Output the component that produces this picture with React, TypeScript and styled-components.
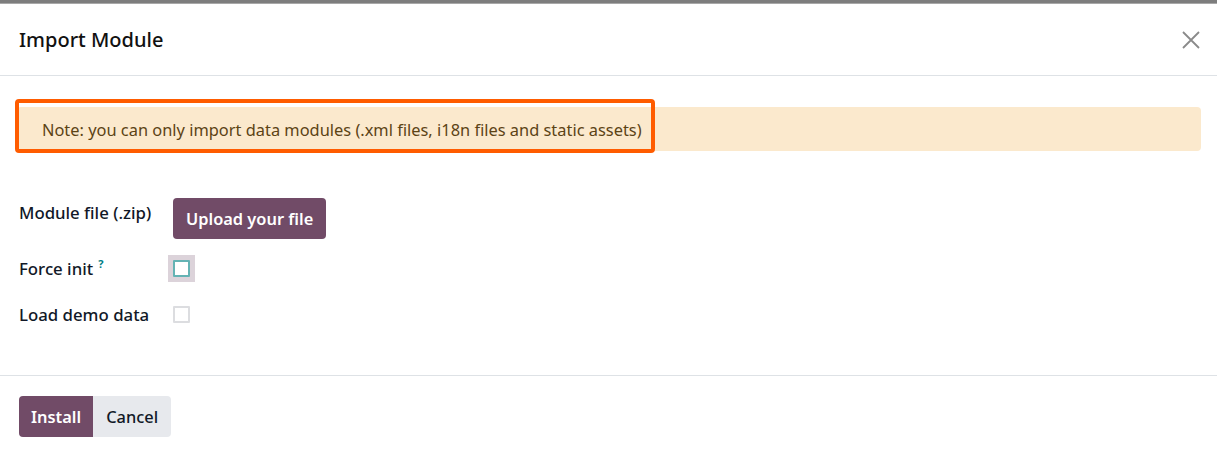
import React, { FC } from 'react'
import styled, { createGlobalStyle } from 'styled-components'

const GlobalStyle = createGlobalStyle`
  html, body {
    margin: 0;
    padding: 0;
    background: #ffffff;
  }

  body {
    font-family: 'Noto Sans', 'Open Sans', sans-serif;
    color: #111827;
  }
`

const Backdrop = styled.div`
  height: 3px;
  background: #7d7d7d;
  border-bottom: 1px solid #a8a8a8;
`

const Dialog = styled.div`
  display: flex;
  flex-direction: column;
  background: #ffffff;
`

const Header = styled.div`
  display: flex;
  align-items: center;
  justify-content: space-between;
  height: 71px;
  padding: 0 16px 0 19px;
  border-bottom: 1px solid #dee2e6;

  h4 {
    margin: 0;
    font-size: 20px;
    font-weight: 500;
    color: #111111;
  }
`

const CloseButton = styled.button`
  display: flex;
  border: 0;
  background: transparent;
  padding: 0;
  cursor: pointer;

  svg {
    width: 20px;
    height: 20px;
  }
`

const Body = styled.div`
  position: relative;
  display: flex;
  flex-direction: column;
  padding: 31px 16px 0 17px;
  height: 268px;
  border-bottom: 1px solid #dee2e6;
`

const Alert = styled.div`
  display: flex;
  align-items: center;
  height: 44px;
  padding: 0 25px;
  background: #fbe9cd;
  border-radius: 4px;
  color: #5c4315;
  font-size: 16.4px;
`

const Highlight = styled.div`
  position: absolute;
  left: 15px;
  top: 23px;
  width: 632px;
  height: 46px;
  border: 4px solid #ff5c00;
  border-radius: 4px;
`

const Form = styled.div`
  display: grid;
  grid-template-columns: 154px auto;
  grid-template-rows: 47px 46px 46px;
  margin-top: 47px;
  padding-left: 2px;
`

const Label = styled.label`
  display: flex;
  align-items: center;
  font-size: 16.8px;
  font-weight: 500;
  color: #111827;

  sup {
    align-self: flex-start;
    margin: 11px 0 0 5px;
    font-size: 11px;
    font-weight: 700;
    line-height: 15px;
    color: #017e84;
  }
`

const TopLabel = styled(Label)`
  align-items: flex-start;
  padding-top: 3px;
`

const Field = styled.div<{ $top?: boolean }>`
  display: flex;
  align-items: ${({ $top }) => ($top ? 'flex-start' : 'center')};
`

const PrimaryButton = styled.button<{ $joined?: boolean }>`
  height: 41px;
  padding: 0 ${({ $joined }) => ($joined ? 12 : 13)}px;
  border: 0;
  border-radius: ${({ $joined }) => ($joined ? '4px 0 0 4px' : '4px')};
  background: #714b67;
  color: #ffffff;
  font-family: inherit;
  font-size: 16.4px;
  font-weight: 600;
  cursor: pointer;
`

const SecondaryButton = styled.button`
  height: 41px;
  padding: 0 13px;
  border: 0;
  border-radius: 0 4px 4px 0;
  background: #e7e9ed;
  color: #111827;
  font-family: inherit;
  font-size: 16.4px;
  font-weight: 500;
  cursor: pointer;
`

const CheckWrap = styled.span<{ $focused?: boolean }>`
  display: flex;
  align-items: center;
  justify-content: center;
  width: 27px;
  height: 27px;
  margin-left: -5px;
  background: ${({ $focused }) => ($focused ? '#dcd3da' : 'transparent')};
`

const Checkbox = styled.span<{ $focused?: boolean }>`
  display: block;
  width: 13px;
  height: 13px;
  border: 2px solid ${({ $focused }) => ($focused ? '#64b3b4' : '#dcdde0')};
  background: #ffffff;
  border-radius: 1px;
`

const Footer = styled.div`
  display: flex;
  padding: 20px 19px 16px;
`

const App: FC = () => {
  return (
    <>
      <GlobalStyle />
      <Backdrop />
      <Dialog>
        <Header>
          <h4>Import Module</h4>
          <CloseButton aria-label="Close">
            <svg viewBox="0 0 20 20">
              <path d="M2 2 L18 18 M18 2 L2 18" stroke="#8a8a8a" strokeWidth="1.8" fill="none" />
            </svg>
          </CloseButton>
        </Header>
        <Body>
          <Alert>Note: you can only import data modules (.xml files, i18n files and static assets)</Alert>
          <Highlight />
          <Form>
            <TopLabel>Module file (.zip)</TopLabel>
            <Field $top>
              <PrimaryButton>Upload your file</PrimaryButton>
            </Field>
            <Label>
              Force init<sup>?</sup>
            </Label>
            <Field>
              <CheckWrap $focused>
                <Checkbox $focused />
              </CheckWrap>
            </Field>
            <Label>Load demo data</Label>
            <Field>
              <CheckWrap>
                <Checkbox />
              </CheckWrap>
            </Field>
          </Form>
        </Body>
        <Footer>
          <PrimaryButton $joined>Install</PrimaryButton>
          <SecondaryButton>Cancel</SecondaryButton>
        </Footer>
      </Dialog>
    </>
  )
}

export default App
